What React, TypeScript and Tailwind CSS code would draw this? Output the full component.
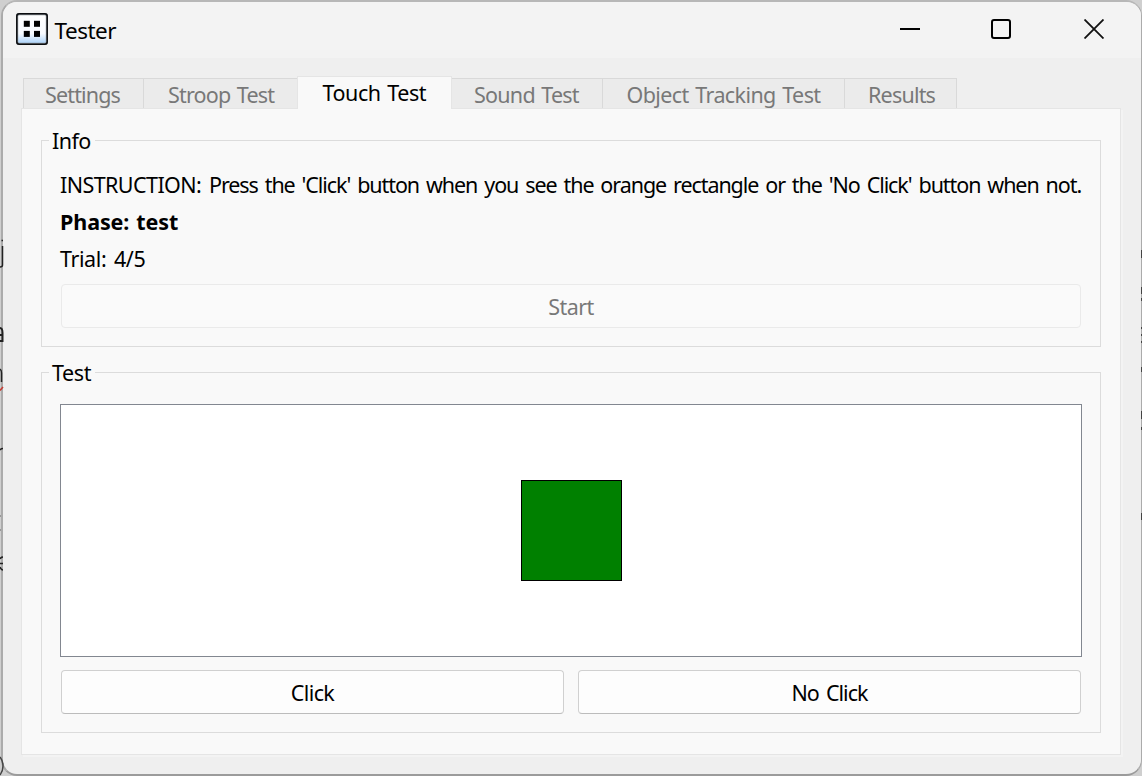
import type { ReactNode } from "react";

type Tab = { label: string; className: string };

const tabsBefore: Tab[] = [
  { label: "Settings", className: "w-[120px] border-l pl-[21px] tracking-[-0.85px]" },
  { label: "Stroop Test", className: "w-[154px] border-l pl-[24px] tracking-[-0.8px]" },
];

const tabsAfter: Tab[] = [
  { label: "Sound Test", className: "w-[150px] pl-[22px] tracking-[-0.75px]" },
  { label: "Object Tracking Test", className: "w-[242px] border-l pl-[23.5px] tracking-[-0.59px]" },
  { label: "Results", className: "w-[113px] border-x pl-[23px] tracking-[-0.8px]" },
];

function InactiveTab({ label, className }: Tab) {
  return (
    <div
      className={`mt-[2px] h-[30px] whitespace-nowrap border-t border-[#d9d9d9] bg-[#ebebeb] leading-[32px] text-[#787878] ${className}`}
    >
      {label}
    </div>
  );
}

function TitleBar() {
  return (
    <header className="flex h-[56px] shrink-0 items-start bg-[#f3f3f3] pl-[13px]">
      <svg className="mt-[11px] h-8 w-8 shrink-0" viewBox="0 0 32 32">
        <defs>
          <linearGradient id="face" x1="0" y1="0" x2="0" y2="1">
            <stop offset="0" stopColor="#ffffff" />
            <stop offset="0.65" stopColor="#f7faff" />
            <stop offset="1" stopColor="#a6d0fa" />
          </linearGradient>
          <filter id="soft" x="-20%" y="-20%" width="140%" height="140%">
            <feGaussianBlur stdDeviation="0.6" />
          </filter>
        </defs>
        <rect x="1" y="1" width="30" height="30" rx="2.5" fill="url(#face)" stroke="#8c9299" strokeWidth="2.4" />
        <rect x="0.8" y="0.8" width="30.4" height="30.4" rx="2.5" fill="none" stroke="#0b0d10" strokeWidth="1.5" />
        <g fill="#050505" filter="url(#soft)">
          <rect x="7.8" y="7.8" width="6" height="6" />
          <rect x="18" y="7.8" width="6" height="6" />
          <rect x="7.8" y="17.9" width="6" height="6" />
          <rect x="18" y="17.9" width="6" height="6" />
        </g>
      </svg>
      <h1 className="ml-[6.5px] mt-[13px] text-[22.5px] leading-8 tracking-[-0.5px]">Tester</h1>
      <div className="ml-auto mr-[37px] mt-[17px] flex gap-[71px]">
        <svg className="h-[20px] w-[20px]" viewBox="0 0 20 20">
          <rect x="0" y="9" width="20" height="2" fill="#000" />
        </svg>
        <svg className="h-[20px] w-[20px]" viewBox="0 0 20 20">
          <rect x="1" y="1" width="18" height="18" rx="2" fill="none" stroke="#000" strokeWidth="2" />
        </svg>
        <svg className="ml-[2px] h-[20px] w-[20px]" viewBox="0 0 20 20">
          <path d="M0.5 0.5 19.5 19.5M19.5 0.5 0.5 19.5" stroke="#111" strokeWidth="1.8" />
        </svg>
      </div>
    </header>
  );
}

function Group({ title, className, children }: { title: ReactNode; className: string; children: ReactNode }) {
  return (
    <section className={`relative border border-[#dcdcdc] ${className}`}>
      <h2 className="absolute left-[7px] top-[-15px] h-[30px] bg-[#f9f9f9] pl-[3px] pr-[4px] leading-[30px]">{title}</h2>
      {children}
    </section>
  );
}

function PushButton({ children, className }: { children: ReactNode; className: string }) {
  return (
    <button className={`h-[44px] rounded-[4px] border border-[#d0d0d0] border-b-[#bcbcbc] bg-[#fdfdfd] pt-[2px] leading-[40px] ${className}`}>
      {children}
    </button>
  );
}

export default function App() {
  return (
    <div className="flex h-[776px] w-[1142px] overflow-hidden bg-[#cfcfcf] font-['Noto_Sans',sans-serif] text-[21.5px] text-black [word-spacing:1.5px]">
      <div className="relative flex h-[776px] w-[1142px] flex-col">
        <div className="ml-[1px] flex h-[776px] w-[1141px] flex-col overflow-hidden rounded-[16px] border-b-2 border-l-2 border-r border-t-2 border-[#ababab] border-b-[#9b9b9b] border-t-[#b7b7b7] bg-[#efefef]">
          <TitleBar />
          <div className="flex flex-col pl-[18px] pt-[18px]">
            <nav className="flex h-[32px] items-start pl-[2px]">
              {tabsBefore.map((tab) => (
                <InactiveTab key={tab.label} {...tab} />
              ))}
              <div className="relative z-10 h-[33px] w-[155px] border-x border-t border-[#e5e5e5] bg-[#f9f9f9] pl-[24.5px] leading-[31px] tracking-[-0.45px]">
                Touch Test
              </div>
              {tabsAfter.map((tab) => (
                <InactiveTab key={tab.label} {...tab} />
              ))}
            </nav>
            <main className="flex h-[647px] w-[1100px] flex-col border border-[#e5e5e5] bg-[#f9f9f9] pl-[19px] pt-[31px] shadow-[2px_2px_0_#f3f3f3]">
              <Group title={<span className="tracking-[-0.6px]">Info</span>} className="h-[207px] w-[1060px] pl-[18px] pt-[25px]">
                <p className="h-[37px] whitespace-nowrap leading-[37px]">
                  <span className="tracking-[-0.58px] [word-spacing:2.7px]">INSTRUCTION: </span>
                  <span className="tracking-[-1.07px] [word-spacing:2.4px]">
                    Press the 'Click' button when you see the orange rectangle or the 'No Click' button when not.
                  </span>
                </p>
                <p className="h-[37px] font-bold leading-[37px] tracking-[-0.1px]">Phase: test</p>
                <p className="h-[37px] leading-[37px] tracking-[-0.4px] [word-spacing:2.5px]">Trial: 4/5</p>
                <button
                  disabled
                  className="ml-[1px] mt-[7px] block h-[44px] w-[1020px] rounded-[4px] border border-[#eaeaea] bg-[#fafafa] pt-[2px] leading-[40px] tracking-[-0.6px] text-[#787878]"
                >
                  Start
                </button>
              </Group>
              <Group title={<span className="tracking-[-0.4px]">Test</span>} className="mt-[25px] h-[361px] w-[1060px] pl-[18px] pt-[31px]">
                <div className="flex h-[253px] w-[1022px] items-center justify-center border border-[#828790] bg-white">
                  <div className="h-[101px] w-[101px] border border-black bg-[#008000]" />
                </div>
                <div className="ml-[1px] mt-[13px] flex gap-[14px]">
                  <PushButton className="w-[503px] tracking-[-0.6px]">Click</PushButton>
                  <PushButton className="w-[503px] tracking-[-1px] [word-spacing:2.5px]">No Click</PushButton>
                </div>
              </Group>
            </main>
          </div>
        </div>
        <svg className="absolute left-0 top-0 h-[776px] w-[4px]" viewBox="0 0 4 776" fill="none" stroke="#222" strokeWidth="1.5">
          <path d="M1.5 240.500h1.500M2.500 246v19q0 2-2.500 2" />
          <path d="M0 328q2.500 0 2.500 5v9M0 335h2.500M0 341h2.500" strokeWidth="2" />
          <path d="M0 369q1.500 1 1.500 4v9" />
          <path d="M0 390.500 3 387" stroke="#c53a31" />
          <path d="M0 450q1-1.500 3-1.500" />
          <path d="M0 516h1M0 530h1" stroke="#888" />
          <path d="M0 559q1-2 3-2M0 563.500h3M0 567q1 3 3 3" />
          <path d="M0 757q3 4 3 9t-3 9" stroke="#444" />
        </svg>
        <svg className="absolute right-0 top-0 h-[776px] w-[1px]" viewBox="0 0 1 776" stroke="#444">
          <path d="M.5 250v8M.5 287v7M.5 298v3M.5 327v2M.5 334v2M.5 341v2M.5 367v5M.5 411v8M.5 427v3M.5 513v7" />
        </svg>
      </div>
    </div>
  );
}
